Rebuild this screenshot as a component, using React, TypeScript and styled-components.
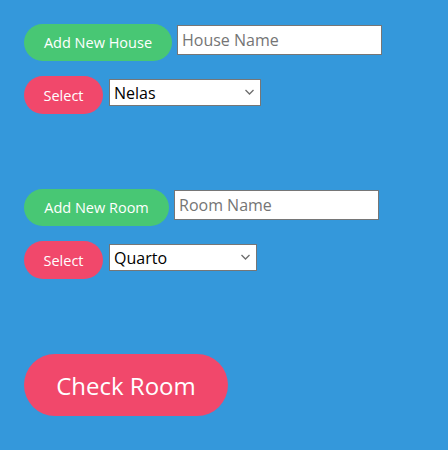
import React from "react";
import styled, { createGlobalStyle } from "styled-components";

const Global = createGlobalStyle`
  html, body { margin: 0; padding: 0; background: #3498db; }
  body { font-family: "Open Sans", "Noto Sans", sans-serif; }
  #root { min-height: 450px; }
`;

const Page = styled.div`
  display: flex;
  flex-direction: column;
  padding: 24px;
  min-height: 450px;
  box-sizing: border-box;
  background: #3498db;
`;

const Section = styled.div`
  display: flex;
  flex-direction: column;
  gap: 15px;
  margin-bottom: 75px;
`;

const Row = styled.div`
  display: flex;
  align-items: flex-start;
`;

const Pill = styled.button<{ $tone: "green" | "red"; $w: number; $h: number; $size: number }>`
  box-sizing: border-box;
  width: ${(p) => p.$w}px;
  height: ${(p) => p.$h}px;
  border: none;
  border-radius: ${(p) => p.$h / 2}px;
  background: ${(p) => (p.$tone === "green" ? "#48c774" : "#f1486b")};
  color: #ffffff;
  font-family: "Open Sans", "Noto Sans", sans-serif;
  font-size: ${(p) => p.$size}px;
  padding: 0;
  flex: none;
  cursor: pointer;
`;

const TextField = styled.input<{ $gap: number; $top: number; $w: number }>`
  box-sizing: border-box;
  margin: ${(p) => p.$top}px 0 0 ${(p) => p.$gap}px;
  width: ${(p) => p.$w}px;
  height: 30px;
  border: 1px solid #767676;
  background: #ffffff;
  padding: 0 4px;
  font-family: "Open Sans", "Noto Sans", sans-serif;
  font-size: 16px;
  color: #000;
  &::placeholder { color: #757575; }
`;

const SelectWrap = styled.div<{ $gap: number; $top: number; $w: number }>`
  position: relative;
  margin: ${(p) => p.$top}px 0 0 ${(p) => p.$gap}px;
  width: ${(p) => p.$w}px;
  height: 27px;
  flex: none;
`;

const Dropdown = styled.select`
  appearance: none;
  box-sizing: border-box;
  width: 100%;
  height: 100%;
  border: 1px solid #767676;
  border-radius: 0;
  background: #ffffff;
  padding: 0 20px 0 4px;
  font-family: "Open Sans", "Noto Sans", sans-serif;
  font-size: 16px;
  color: #000;
`;

const Chevron = styled.svg`
  position: absolute;
  right: 7px;
  top: 10px;
  width: 9px;
  height: 6px;
  pointer-events: none;
`;

const Arrow = () => (
  <Chevron viewBox="0 0 9 6">
    <path d="M0.5 1 L4.5 5 L8.5 1" fill="none" stroke="#6d6d6d" strokeWidth="1.3" />
  </Chevron>
);

export default function App() {
  return (
    <>
      <Global />
      <Page>
        <Section>
          <Row>
            <Pill $tone="green" $w={148} $h={37} $size={14.5}>Add New House</Pill>
            <TextField $gap={5} $top={1} $w={205} placeholder="House Name" />
          </Row>
          <Row>
            <Pill $tone="red" $w={79} $h={38} $size={14.5}>Select</Pill>
            <SelectWrap $gap={6} $top={3} $w={152}>
              <Dropdown defaultValue="Nelas">
                <option>Nelas</option>
              </Dropdown>
              <Arrow />
            </SelectWrap>
          </Row>
        </Section>
        <Section>
          <Row>
            <Pill $tone="green" $w={145} $h={37} $size={14.5}>Add New Room</Pill>
            <TextField $gap={5} $top={1} $w={205} placeholder="Room Name" />
          </Row>
          <Row>
            <Pill $tone="red" $w={79} $h={38} $size={14.5}>Select</Pill>
            <SelectWrap $gap={6} $top={3} $w={148}>
              <Dropdown defaultValue="Quarto">
                <option>Quarto</option>
              </Dropdown>
              <Arrow />
            </SelectWrap>
          </Row>
        </Section>
        <Row>
          <Pill $tone="red" $w={204} $h={62} $size={24}>Check Room</Pill>
        </Row>
      </Page>
    </>
  );
}
